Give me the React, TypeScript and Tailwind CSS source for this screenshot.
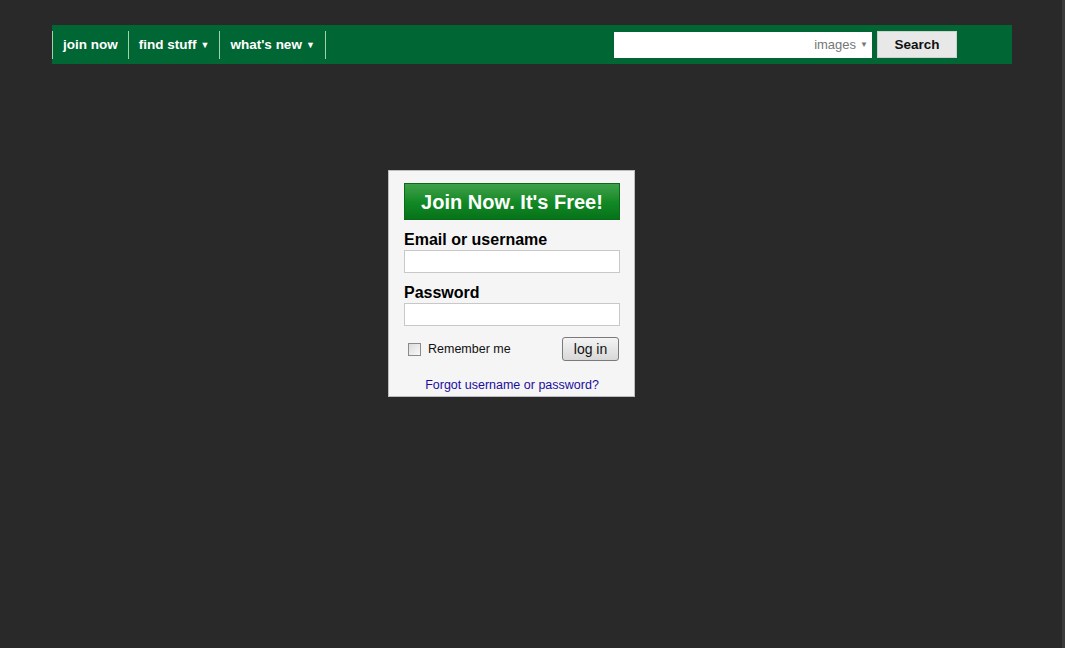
import React from 'react';

const NavItem = ({ label, caret }: { label: string; caret?: boolean }) => (
  <a href="#" className="flex h-[28px] items-center gap-[4px] border-r border-[#9fd3a8] px-[10px] pt-[1px] text-[13.5px] font-bold text-white">
    {label}
    {caret && <span className="text-[9px] leading-none">▼</span>}
  </a>
);

const App: React.FC = () => {
  return (
    <div
      className="relative h-[648px] w-full overflow-hidden bg-[#292929]"
      style={{ fontFamily: '"Liberation Sans", Arial, sans-serif' }}
    >
      {/* top bar */}
      <div className="pl-[52px] pt-[25px]">
        <div className="flex h-[39px] w-[960px] items-center bg-[#006633]">
          <nav className="flex items-center border-l border-[#9fd3a8]">
            <NavItem label="join now" />
            <NavItem label="find stuff" caret />
            <NavItem label="what's new" caret />
          </nav>
          <div className="ml-auto mr-[55px] flex items-center gap-[5px]">
            <div className="flex h-[26px] w-[258px] items-center justify-end bg-white pr-[4px] pt-[1px] text-[13px] text-[#777]">
              <span>images</span>
              <span className="ml-[4px] text-[8px] leading-none">▼</span>
            </div>
            <button className="h-[27px] w-[80px] border border-[#d0d0d0] bg-[#e8e8e8] pt-[1px] text-[13.5px] font-bold text-[#111]">
              Search
            </button>
          </div>
        </div>
      </div>

      {/* login box */}
      <div className="ml-[388px] mt-[106px] h-[227px] w-[247px] border border-[#bdbdbd] bg-[#f5f5f5] px-[15px] pt-[12px]">
        <button className="h-[37px] w-[216px] border border-[#0a6a1a] bg-gradient-to-b from-[#3ea04a] via-[#138a26] to-[#067319] text-[20px] font-bold text-white">
          Join Now. It's Free!
        </button>
        <div className="mt-[11px] text-[16px] font-bold leading-[18px] text-black">Email or username</div>
        <div className="mt-[1px] h-[23px] w-[216px] border border-[#c8c8c8] bg-white"></div>
        <div className="mt-[11px] text-[16px] font-bold leading-[18px] text-black">Password</div>
        <div className="mt-[1px] h-[23px] w-[216px] border border-[#c8c8c8] bg-white"></div>
        <div className="mt-[11px] flex w-[216px] items-start justify-between">
          <label className="mt-[3px] flex items-center text-[12.5px] text-[#111]">
            <span className="ml-[4px] mr-[7px] h-[13px] w-[13px] border border-[#8a8a8a] bg-gradient-to-br from-[#dcdcdc] to-[#f8f8f8]"></span>
            Remember me
          </label>
          <button className="mr-[1px] h-[24px] w-[57px] rounded-[3px] border border-[#7a7a7a] bg-gradient-to-b from-[#f4f4f4] to-[#d8d8d8] text-[14px] text-[#111]">
            log in
          </button>
        </div>
        <div className="mt-[15px] w-[216px] text-center text-[12.5px] text-[#1a0d9e]">
          Forgot username or password?
        </div>
      </div>

      {/* right edge strip */}
      <div className="absolute right-0 top-0 h-full w-[3px] bg-[#3b3b3b]"></div>
    </div>
  );
};

export default App;
